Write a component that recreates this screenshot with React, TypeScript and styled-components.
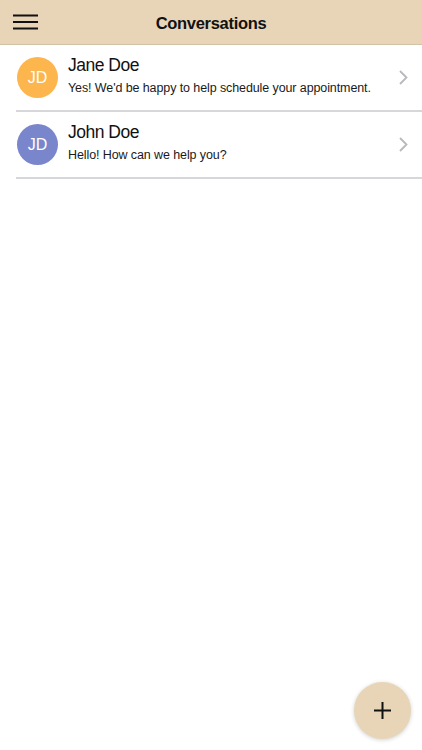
import styled, {createGlobalStyle} from 'styled-components';

const GlobalStyle = createGlobalStyle`
  html, body {
    margin: 0;
    padding: 0;
    background: #ffffff;
    font-family: "Liberation Sans", Arial, sans-serif;
  }
`;

type Conversation = {
  id: string;
  name: string;
  initials: string;
  color: string;
  preview: string;
};

const conversations: Conversation[] = [
  {
    id: 'jane',
    name: 'Jane Doe',
    initials: 'JD',
    color: '#fdb54e',
    preview: "Yes! We'd be happy to help schedule your appointment.",
  },
  {
    id: 'john',
    name: 'John Doe',
    initials: 'JD',
    color: '#7a86cb',
    preview: 'Hello! How can we help you?',
  },
];

const Screen = styled.div`
  width: 422px;
  height: 750px;
  position: relative;
  overflow: hidden;
  background: #ffffff;
`;

const Header = styled.header`
  height: 44px;
  background: #e8d5b7;
  border-bottom: 1px solid #d2c2a6;
  display: grid;
  grid-template-columns: 60px 1fr 60px;
  align-items: center;
`;

const MenuButton = styled.button`
  border: 0;
  background: none;
  padding: 0 0 0 13px;
  display: flex;
  align-items: center;
  height: 44px;
`;

const Title = styled.h1`
  margin: 2px 0 0;
  text-align: center;
  font-size: 16.5px;
  letter-spacing: -0.3px;
  font-weight: 700;
  color: #111111;
`;

const List = styled.ul`
  list-style: none;
  margin: 0;
  padding: 0 0 0 16px;
`;

const Row = styled.li`
  display: flex;
  align-items: center;
  height: 65px;
  border-bottom: 2px solid #d6d6db;
`;

const Avatar = styled.div<{$color: string}>`
  width: 41px;
  height: 41px;
  border-radius: 50%;
  background: ${p => p.$color};
  color: #ffffff;
  font-size: 16px;
  display: flex;
  align-items: center;
  justify-content: center;
  flex-shrink: 0;
  margin-left: 1px;
`;

const Body = styled.div`
  flex: 1;
  min-width: 0;
  margin-left: 10px;
  margin-bottom: 4px;
  display: flex;
  flex-direction: column;
  gap: 4px;
`;

const Name = styled.div`
  font-size: 17.5px;
  letter-spacing: -0.5px;
  color: #111111;
  line-height: 22px;
`;

const Preview = styled.div`
  font-size: 12.5px;
  letter-spacing: -0.1px;
  color: #1a1a1a;
  line-height: 17px;
  white-space: nowrap;
  overflow: hidden;
  text-overflow: ellipsis;
`;

const Chevron = styled.div`
  width: 38px;
  display: flex;
  justify-content: center;
  flex-shrink: 0;
`;

const Fab = styled.button`
  position: absolute;
  right: 11px;
  bottom: 11px;
  width: 57px;
  height: 57px;
  border-radius: 50%;
  border: 0;
  background: #e8d5b7;
  box-shadow: 0 1px 4px rgba(0, 0, 0, 0.18);
  display: flex;
  align-items: center;
  justify-content: center;
`;

export default function App() {
  return (
    <Screen>
      <GlobalStyle />
      <Header>
        <MenuButton aria-label="Menu">
          <svg width="25" height="16" viewBox="0 0 25 16">
            <path d="M0 1.5h25M0 8h25M0 14.5h25" stroke="#111" strokeWidth="2.2" />
          </svg>
        </MenuButton>
        <Title>Conversations</Title>
        <span />
      </Header>
      <List>
        {conversations.map(c => (
          <Row key={c.id}>
            <Avatar $color={c.color}>{c.initials}</Avatar>
            <Body>
              <Name>{c.name}</Name>
              <Preview>{c.preview}</Preview>
            </Body>
            <Chevron>
              <svg width="9" height="15" viewBox="0 0 9 15">
                <path d="M1 1l6.5 6.5L1 14" fill="none" stroke="#b8b8bd" strokeWidth="1.8" />
              </svg>
            </Chevron>
          </Row>
        ))}
      </List>
      <Fab aria-label="New conversation">
        <svg width="17" height="17" viewBox="0 0 17 17">
          <path d="M8.5 0v17M0 8.5h17" stroke="#111" strokeWidth="2" />
        </svg>
      </Fab>
    </Screen>
  );
}
